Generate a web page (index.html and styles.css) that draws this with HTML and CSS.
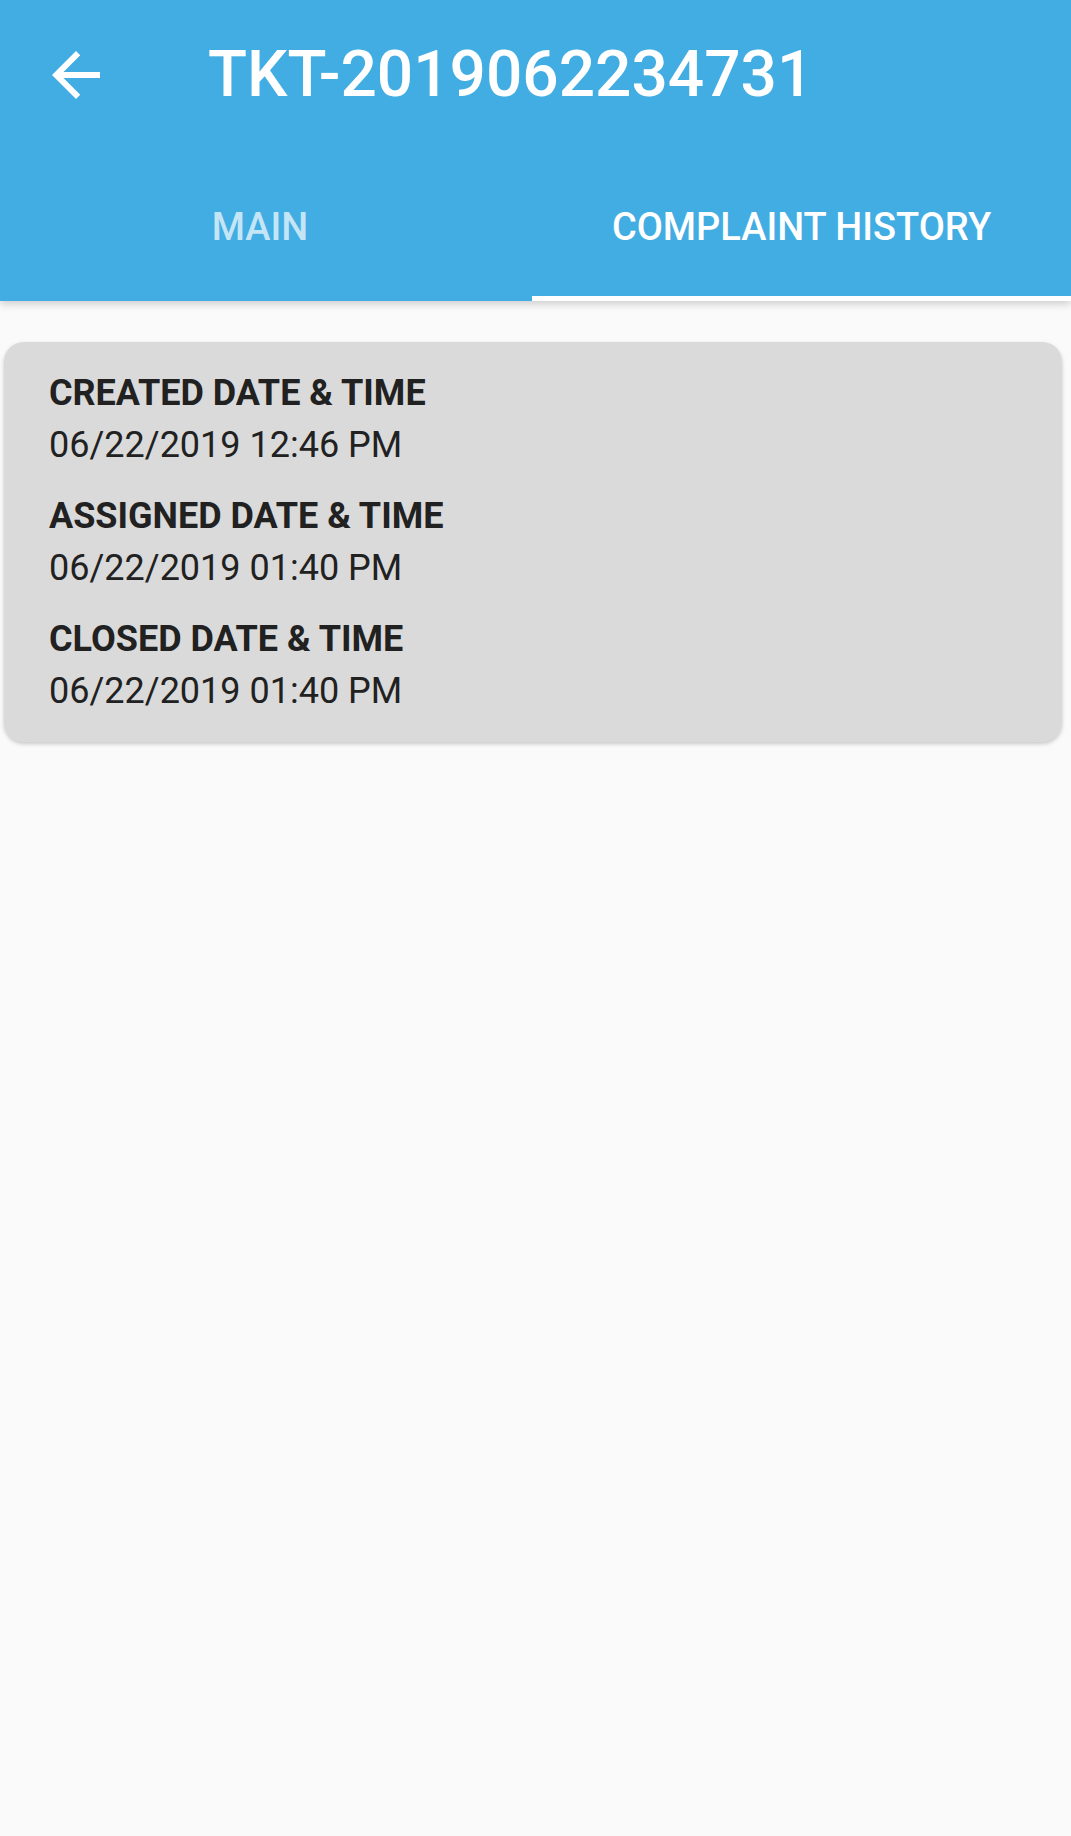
FILE: index.html
```html
<!DOCTYPE html>
<html lang="en">
<head>
  <meta charset="UTF-8" />
  <meta name="viewport" content="width=device-width, initial-scale=1" />
  <title>TKT-2019062234731</title>
  <link rel="stylesheet" href="styles.css">
</head>
<body>
  <header class="appbar">
    <div class="toolbar">
      <button class="back" aria-label="Back">
        <svg viewBox="0 0 24 24" width="72" height="72"><path fill="#fff" d="M20 11H7.83l5.59-5.59L12 4l-8 8 8 8 1.41-1.41L7.83 13H20v-2z"/></svg>
      </button>
      <h1 class="title">TKT-2019062234731</h1>
    </div>
    <nav class="tabs">
      <div class="tab first">MAIN</div>
      <div class="tab active">COMPLAINT HISTORY</div>
    </nav>
  </header>

  <main class="content">
    <div class="card">
      <div class="row">
        <div class="label">CREATED DATE &amp; TIME</div>
        <div class="value">06/22/2019 12:46 PM</div>
      </div>
      <div class="row">
        <div class="label">ASSIGNED DATE &amp; TIME</div>
        <div class="value">06/22/2019 01:40 PM</div>
      </div>
      <div class="row">
        <div class="label">CLOSED DATE &amp; TIME</div>
        <div class="value">06/22/2019 01:40 PM</div>
      </div>
    </div>
  </main>
</body>
</html>
```

FILE: styles.css
```css
body {
  margin: 0;
  font-family: Roboto, "Liberation Sans", sans-serif;
  background: #fafafa;
  min-height: 1836px;
}
.appbar {
  background: #42ade2;
  color: #fff;
  box-shadow: 0 3px 8px rgba(0, 0, 0, 0.18);
}
.toolbar {
  display: flex;
  align-items: center;
  height: 150px;
  padding-left: 40px;
}
.back {
  display: flex;
  padding: 0;
  border: 0;
  background: none;
  margin-right: 96px;
}
.title {
  margin: 0;
  font-size: 64px;
  font-weight: 500;
  line-height: 64px;
}
.tabs {
  display: flex;
  height: 151px;
}
.tab {
  flex: 1;
  display: flex;
  align-items: center;
  justify-content: center;
  padding-top: 3px;
  font-size: 38px;
  font-weight: 500;
  line-height: 38px;
  color: rgba(255, 255, 255, 0.7);
}
.tab.first {
  flex: 0 0 532px;
  padding-right: 12px;
  box-sizing: border-box;
}
.tab.active {
  color: #fff;
  box-shadow: inset 0 -5px #fff;
}
.content {
  padding: 41px 9px 0 4px;
}
.card {
  background: #dadada;
  border-radius: 20px;
  padding: 25px 45px;
  box-shadow: 0 2px 4px rgba(0, 0, 0, 0.2);
  color: #212121;
}
.row + .row {
  margin-top: 19px;
}
.label {
  font-size: 36px;
  font-weight: 700;
  line-height: 52px;
}
.value {
  font-size: 36px;
  line-height: 52px;
}
```
